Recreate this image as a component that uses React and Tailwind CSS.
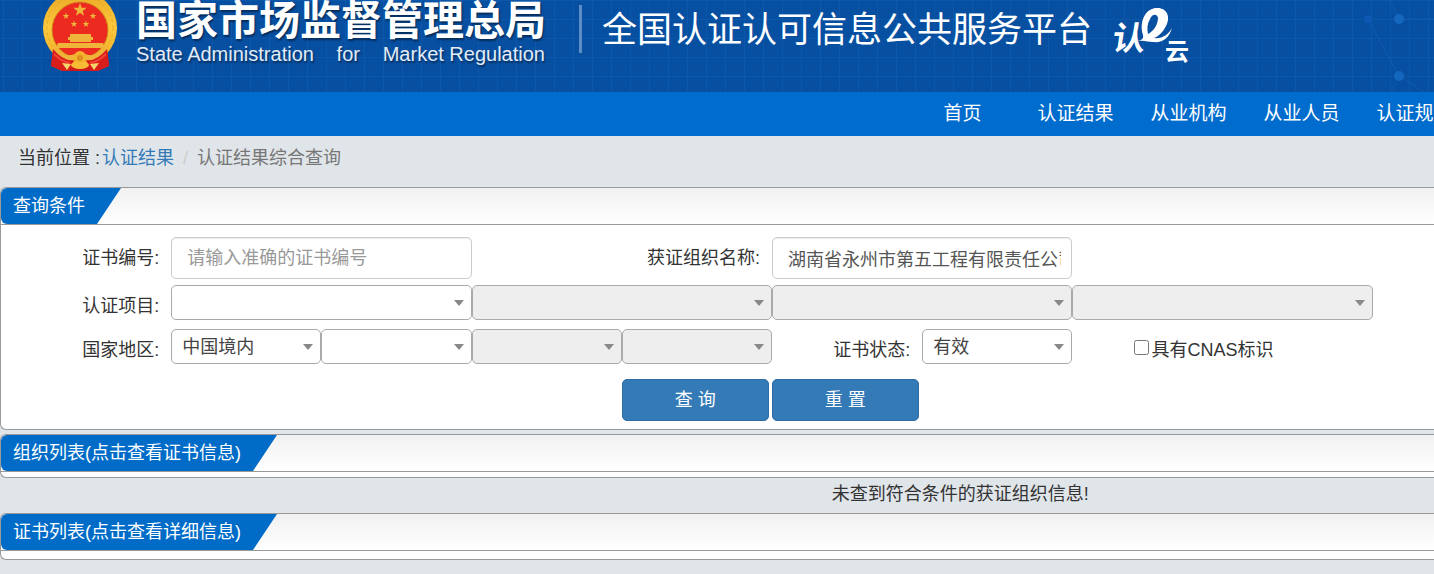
import React from 'react';

const navItems = ['首页', '认证结果', '从业机构', '从业人员', '认证规则'];

const Emblem = () => (
  <svg className="shrink-0" width="76" height="73" viewBox="0 0 76 73" aria-hidden="true">
    <defs>
      <linearGradient id="gold" x1="0" y1="0" x2="0" y2="1">
        <stop offset="0" stopColor="#e9a824" />
        <stop offset="0.5" stopColor="#fcc93c" />
        <stop offset="1" stopColor="#f0a828" />
      </linearGradient>
      <path id="star" d="M0 -7 L1.7 -2.2 L6.7 -2.2 L2.7 0.9 L4.1 5.7 L0 2.8 L-4.1 5.7 L-2.7 0.9 L-6.7 -2.2 L-1.7 -2.2 Z" />
    </defs>
    <path d="M12 46 L9 66 L17 69 L20 71 L56 71 L59 69 L67 66 L65 46 Z" fill="#cf1717" />
    <circle cx="38" cy="28" r="37" fill="url(#gold)" />
    <circle cx="38" cy="28" r="33" fill="none" stroke="#e9a92a" strokeWidth="1" strokeDasharray="3 3" />
    <circle cx="38" cy="30" r="28" fill="#ec2a20" stroke="#d08a1c" strokeWidth="1" />
    <g fill="#eeb53a">
      <use href="#star" transform="translate(38 10)" />
      <use href="#star" transform="translate(24 16) scale(.5)" />
      <use href="#star" transform="translate(51 16) scale(.5)" />
      <use href="#star" transform="translate(32 24) scale(.5)" />
      <use href="#star" transform="translate(44 24) scale(.5)" />
      <path d="M28 34h21v3h2v3h-2v2h-21v-2h-2v-3h2z" />
      <path d="M16 43h45l2 5h-49z" />
      <path d="M14 48 Q25 61 38 51 Q51 61 62 48 L64 53 Q51 65 38 58 Q25 65 12 53 Z" />
    </g>
    <path d="M11 49 Q22 62 32 60 L28 71 L20 71 L9 66 Z M65 49 Q54 62 44 60 L49 71 L56 71 L67 66 Z" fill="#d81d1b" />
    <path d="M12 54 Q20 62 28 63 M64 54 Q56 62 48 63" fill="none" stroke="#f14435" strokeWidth="2" />
    <path d="M20 63l9 1-4 6zM57 63l-9 1 4 6z" fill="#f7d469" />
    <ellipse cx="38" cy="65" rx="9" ry="4" fill="#f6bc35" />
    <circle cx="38" cy="57" r="6" fill="#f3b32f" />
    <circle cx="38" cy="58" r="3" fill="#df8d1e" />
  </svg>
);

const CloudLogo = () => (
  <svg className="shrink-0 overflow-visible" width="80" height="64" viewBox="0 0 80 64" role="img" aria-label="认e云">
    <g fill="#fff">
      <text x="5" y="43" fontSize="33" fontWeight="700" fontFamily="'Noto Sans CJK SC', sans-serif" transform="skewX(-8)">认</text>
      <path fillRule="evenodd" d="M31 28 C27 15 33 2 44 1 C55 0 59 10 54 19 C51 25 47 29 42 31 C50 32 56 28 60 21 C57 31 51 36 41 35 C36 35 32 33 26 34 C29 33 32 32 31 28 Z M36 27 C42 24 46 17 46 11 C45 6 40 7 38 12 C35 17 35 22 36 27 Z" />
      <text x="53" y="53" fontSize="24" fontWeight="700" fontFamily="'Noto Sans CJK SC', sans-serif">云</text>
    </g>
  </svg>
);

const HeaderPattern = () => (
  <svg className="absolute inset-0 h-full w-full" aria-hidden="true">
    <defs>
      <pattern id="grid" width="19" height="19" patternUnits="userSpaceOnUse" x="3">
        <path d="M0 0.5H19M0.5 0V19" stroke="#1c6cc0" strokeOpacity="0.28" fill="none" />
      </pattern>
    </defs>
    <rect width="100%" height="100%" fill="url(#grid)" />
    <svg x="100%" overflow="visible">
      <path d="M-48 -6L-35 19H0M-66 19L-35 76L-43 92M-35 76L-10 92" stroke="#1560bd" strokeOpacity="0.6" fill="none" />
      <circle cx="-35" cy="19" r="5" fill="#1467be" />
      <circle cx="-35" cy="76" r="5" fill="#1467be" />
      <circle cx="-66" cy="19" r="4" fill="#0f57b4" />
    </svg>
  </svg>
);

const Header = () => (
  <header>
    <div className="relative h-[92px] overflow-hidden bg-[#074fa1]">
      <HeaderPattern />
      <div className="relative flex items-start pl-[42px] text-white">
        <Emblem />
        <div className="ml-[18px] w-[427px] shrink-0 whitespace-nowrap [text-shadow:1px_2px_2px_rgba(0,0,0,0.45)]">
          <div className="text-[41px] leading-[42px] font-bold">国家市场监督管理总局</div>
          <div className="flex justify-between pr-[18px] text-xl leading-6 text-[#e3ecf7]">
            <span>State Administration</span>
            <span>for</span>
            <span>Market Regulation</span>
          </div>
        </div>
        <div className="mt-[5px] ml-4 h-12 w-[3px] shrink-0 bg-[#5d8dc6]" />
        <h1 className="ml-5 text-[35px] leading-[60px] whitespace-nowrap">全国认证认可信息公共服务平台</h1>
        <div className="mt-[7px] ml-5">
          <CloudLogo />
        </div>
      </div>
    </div>
    <nav className="flex h-11 justify-end overflow-hidden bg-[#006cce]">
      <div className="flex w-[528px] shrink-0 overflow-hidden">
        {navItems.map((item) => (
          <a key={item} href="#" className="w-[113px] shrink-0 text-center text-[19px] leading-11 text-white">
            {item}
          </a>
        ))}
      </div>
    </nav>
  </header>
);

const Panel = ({ title, children }) => (
  <section className="rounded-l-md border-y border-l border-[#999] bg-white">
    <div className="flex rounded-tl-md border-b border-[#999] bg-linear-to-b from-[#f1f1f1] to-white">
      <h2 className="rounded-l-md bg-[#006cc8] pr-9 pl-3 leading-9 text-white [clip-path:polygon(0_0,100%_0,calc(100%-24px)_100%,0_100%)]">
        {title}
      </h2>
    </div>
    {children}
  </section>
);

const Select = ({ label, id, value, disabled, className }) => (
  <div className={`relative ${className}`}>
    <select
      id={id}
      aria-label={label}
      disabled={disabled}
      className="block h-[35px] w-full appearance-none rounded-[5px] border border-[#aaa] bg-white pr-7 pl-2.5 text-[#444] disabled:bg-[#eee]"
    >
      <option>{value}</option>
    </select>
    <svg className="pointer-events-none absolute top-[15px] right-2" width="10" height="6" viewBox="0 0 10 6" aria-hidden="true">
      <path d="M0 0H10L5 6Z" fill="#888" />
    </svg>
  </div>
);

const rowClass = 'grid grid-cols-[170fr_repeat(8,150fr)_61fr]';
const labelClass = 'pr-3 text-right whitespace-nowrap';
const inputClass =
  'h-[42px] w-full rounded-[5px] border border-[#ccc] bg-white pr-2.5 pl-[15px] text-[#555] shadow-[inset_0_1px_1px_rgba(0,0,0,0.075)] placeholder:text-[#999]';
const buttonClass = 'h-[42px] w-[147px] rounded-[5px] border border-[#2e6da4] bg-[#337ab7] text-white';

const SearchForm = () => (
  <form className="pt-3 pb-2" onSubmit={(e) => e.preventDefault()}>
    <div className={rowClass}>
      <label htmlFor="certNo" className={`${labelClass} leading-[42px]`}>证书编号:</label>
      <div className="col-span-2">
        <input id="certNo" type="text" placeholder="请输入准确的证书编号" className={inputClass} />
      </div>
      <label htmlFor="orgName" className={`${labelClass} col-span-2 leading-[42px]`}>获证组织名称:</label>
      <div className="col-span-2">
        <input id="orgName" type="text" defaultValue="湖南省永州市第五工程有限责任公司" className={inputClass} />
      </div>
    </div>
    <div className={`${rowClass} mt-1.5`}>
      <label htmlFor="project" className={`${labelClass} pt-1 leading-[35px]`}>认证项目:</label>
      <Select id="project" className="col-span-2" />
      <Select label="认证项目二级" disabled className="col-span-2" />
      <Select label="认证项目三级" disabled className="col-span-2" />
      <Select label="认证项目四级" disabled className="col-span-2" />
    </div>
    <div className={`${rowClass} mt-[5px]`}>
      <label htmlFor="country" className={`${labelClass} pt-1 leading-[35px]`}>国家地区:</label>
      <Select id="country" value="中国境内" />
      <Select label="省" />
      <Select label="市" disabled />
      <Select label="区县" disabled />
      <label htmlFor="status" className={`${labelClass} pt-1 leading-[35px]`}>证书状态:</label>
      <Select id="status" value="有效" />
      <label className="col-span-2 flex pt-1 pl-[62px] leading-[35px] whitespace-nowrap">
        <input type="checkbox" className="mt-[7px] mr-0.5 size-[15px]" />
        具有CNAS标识
      </label>
    </div>
    <div className={`${rowClass} mt-[11px]`}>
      <div className="col-span-3 col-start-5 flex gap-[3px]">
        <button type="submit" className={buttonClass}>查 询</button>
        <button type="reset" className={buttonClass}>重 置</button>
      </div>
    </div>
  </form>
);

export default function App() {
  return (
    <div className="min-h-screen overflow-hidden bg-[#e0e5e9] font-['Liberation_Sans','Noto_Sans_CJK_SC',sans-serif] text-lg text-[#333]">
      <Header />
      <main>
        <div className="flex h-[51px] pl-[18px] leading-11">
          <span>当前位置 :</span>
          <a href="#" className="ml-0.5 text-[#337ab7]">认证结果</a>
          <span className="mx-[9px] text-[#ccc]">/</span>
          <span className="text-[#777]">认证结果综合查询</span>
        </div>
        <Panel title="查询条件">
          <SearchForm />
        </Panel>
        <div className="mt-1">
          <Panel title="组织列表(点击查看证书信息)">
            <div className="h-[5px]" />
          </Panel>
        </div>
        <p className="h-[35px] pl-[58%] leading-8 whitespace-nowrap">未查到符合条件的获证组织信息!</p>
        <Panel title="证书列表(点击查看详细信息)">
          <div className="h-2" />
        </Panel>
      </main>
    </div>
  );
}
